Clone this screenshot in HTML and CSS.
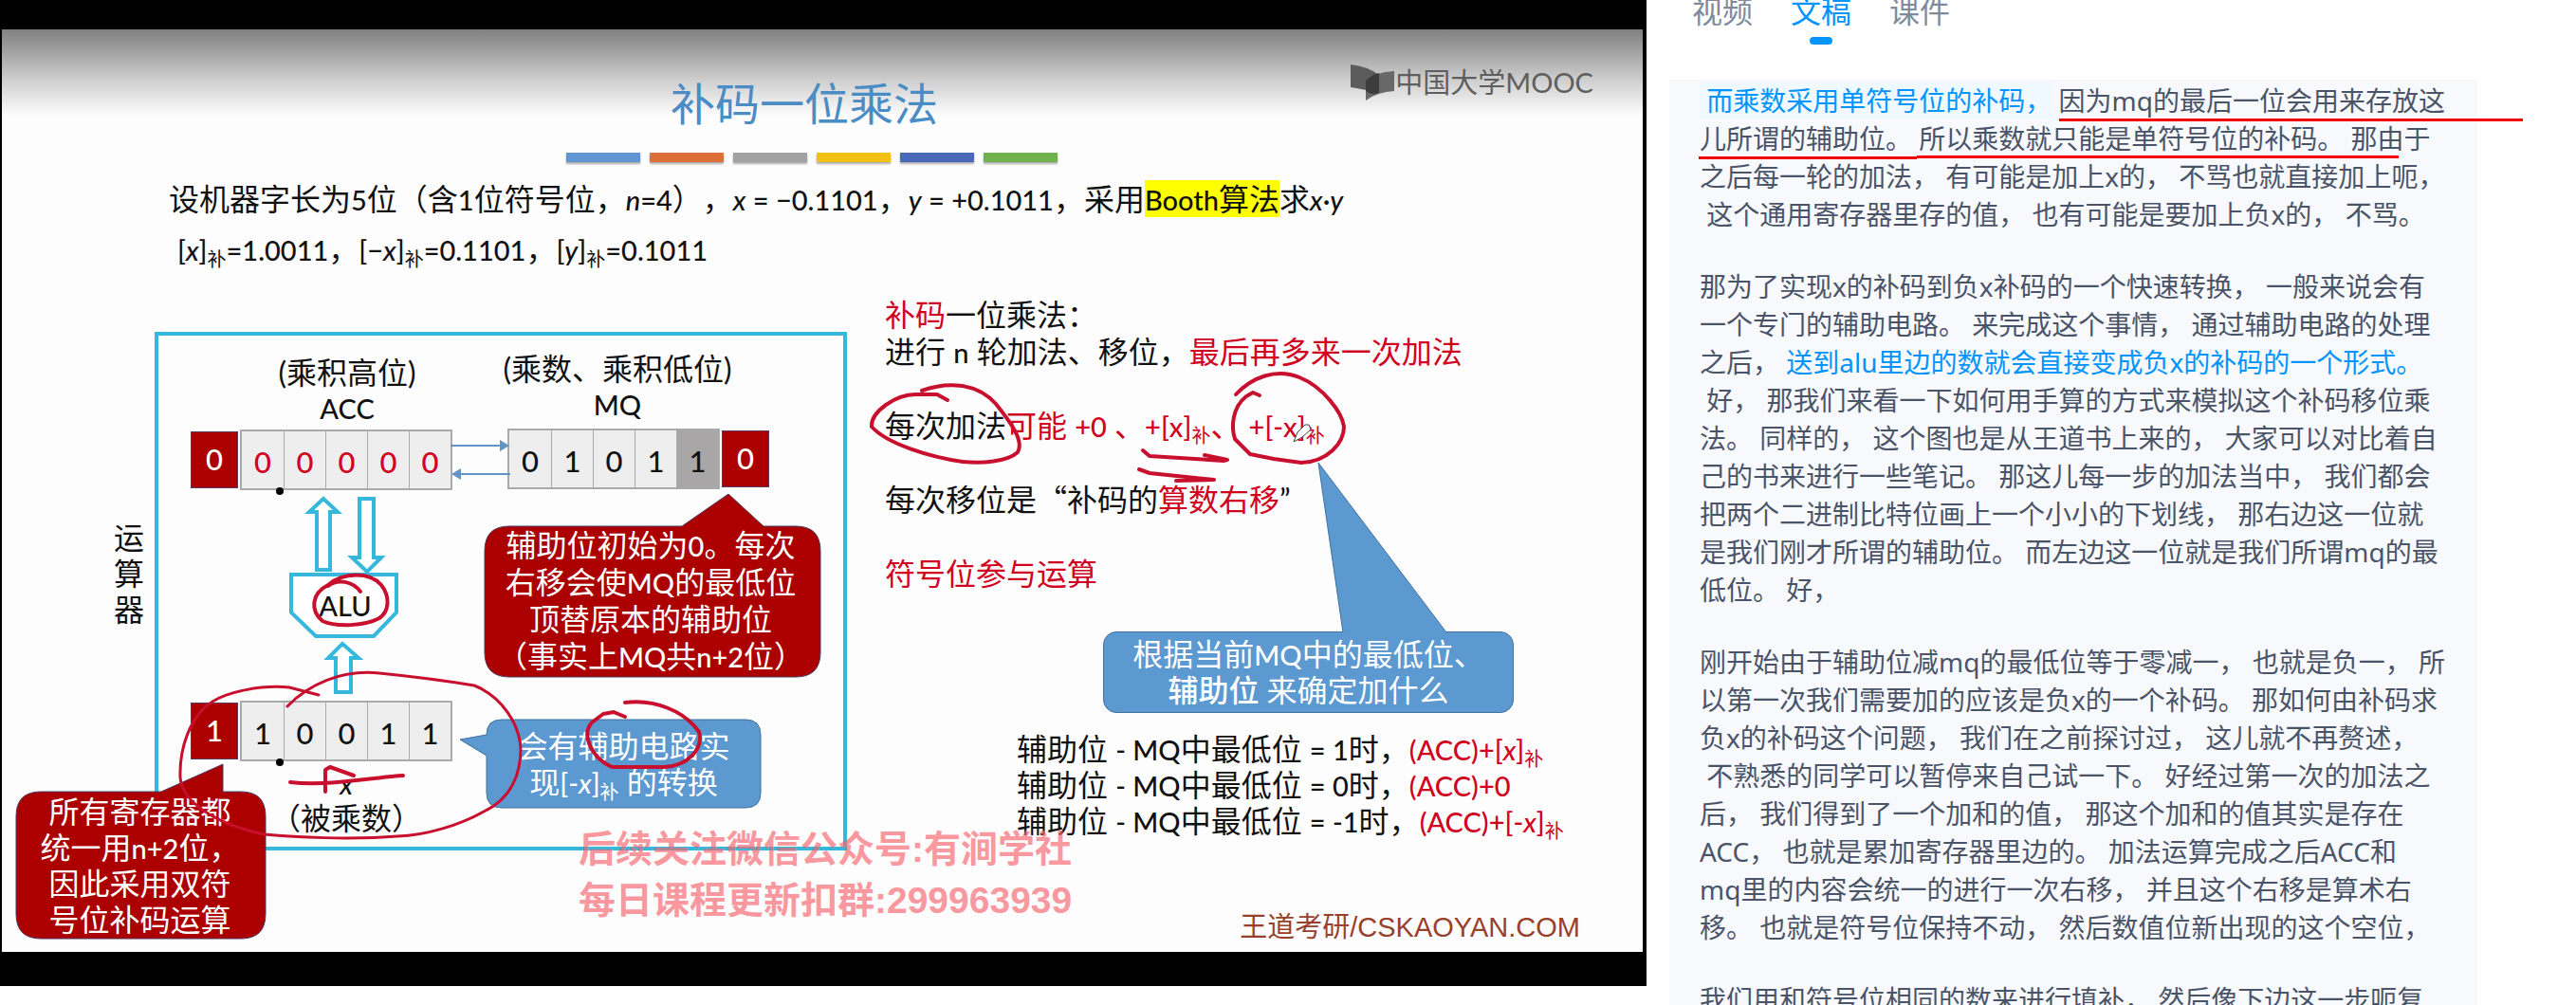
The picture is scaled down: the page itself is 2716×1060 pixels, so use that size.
FILE: index.html
```html
<!DOCTYPE html>
<html lang="zh-CN">
<head>
<meta charset="utf-8">
<title>补码一位乘法</title>
<link rel="stylesheet" href="styles.css">
</head>
<body>
<main class="page">
  <section class="player">
    <article class="slide">
      <div class="brand">
        <svg width="46" height="38" viewBox="0 0 46 38" aria-hidden="true">
          <path d="M0 0Q18 2 30 11V30Q18 27 0 24Z" fill="#5c5c5c"/>
          <path d="M46 7Q26 8 16 17V38Q28 29 46 28Z" fill="#686868"/>
          <path d="M16 17Q22 11 30 9V30Q22 33 16 28Z" fill="#3c3c3c"/>
        </svg>
        <span>中国大学MOOC</span>
      </div>
      <h1 class="title">补码一位乘法</h1>
      <div class="bars">
        <span class="bar blue"></span><span class="bar orange"></span><span class="bar grey"></span><span class="bar yellow"></span><span class="bar indigo"></span><span class="bar green"></span>
      </div>
      <div class="intro">
        <p>设机器字长为<span class="l">5</span>位（含<span class="l">1</span>位符号位，<span class="l"><i>n</i>=4</span>），<span class="l"><i>x</i> = −0.1101</span>，<span class="l"><i>y</i> = +0.1011</span>，采用<mark><span class="l">Booth</span>算法</mark>求<span class="l"><i>x</i>·<i>y</i></span></p>
        <p class="given"><span class="l">[<i>x</i>]</span><sub>补</sub><span class="l">=1.0011</span>，<span class="l">[−<i>x</i>]</span><sub>补</sub><span class="l">=0.1101</span>，<span class="l">[<i>y</i>]</span><sub>补</sub><span class="l">=0.1011</span></p>
      </div>

      <div class="body">
        <div class="diagram">
          <div class="unit"></div>
          <div class="node unit-name">运算器</div>
          <div class="node acc-name">(乘积高位)<br><span class="l">ACC</span></div>
          <div class="node mq-name">(乘数、乘积低位)<br><span class="l">MQ</span></div>

          <div class="node register acc">
            <b class="extra">0</b><span class="cells red"><b>0</b><b>0</b><b>0</b><b>0</b><b>0</b></span>
          </div>
          <div class="node register mq">
            <span class="cells"><b>0</b><b>1</b><b>0</b><b>1</b><b class="low">1</b></span><b class="extra">0</b>
          </div>
          <div class="node register xreg">
            <b class="extra">1</b><span class="cells"><b>1</b><b>0</b><b>0</b><b>1</b><b>1</b></span>
          </div>
          <div class="node x-name"><i class="l">x</i><br>（被乘数）</div>

          <svg class="shapes" width="931" height="692" viewBox="2 312 931 692" aria-hidden="true">
            <g fill="#000"><ellipse cx="295" cy="518" rx="4" ry="4"/><ellipse cx="295" cy="804" rx="4" ry="4"/></g>
            <g fill="none" stroke="#6294c6" stroke-width="2"><path d="M475 470H528M485 500H538"/></g>
            <g fill="#6294c6"><path d="M527 464L537 470L527 476ZM486 494L476 500L486 506Z"/></g>
            <g fill="#fff" stroke="#35b8dc" stroke-width="4">
              <path d="M334 601V540H326L341 526L356 540H348V601Z"/>
              <path d="M379 526V588H371L387 603L402 588H394V526Z"/>
              <path d="M307 606H418V646L394 671H333L307 646Z"/>
              <path d="M354 730V694H346L361 679L378 694H370V730Z"/>
            </g>
            <g fill="#ac0000" stroke="#4b3a63" stroke-width="1">
              <path d="M537 555H719L768 521L805 555H839Q865 555 865 581V688Q865 714 839 714H537Q511 714 511 688V581Q511 555 537 555Z"/>
              <path d="M43 835H170L235 806V835H254Q280 835 280 861V964Q280 990 254 990H43Q17 990 17 964V861Q17 835 43 835Z"/>
            </g>
            <path fill="#5b99d0" stroke="#41719c" stroke-width="1" d="M529 759H786Q802 759 802 775V836Q802 852 786 852H529Q513 852 513 836V797L485 780L513 775Q513 759 529 759Z"/>
          </svg>
          <div class="node alu">ALU</div>
          <div class="node note aux">辅助位初始为<span class="l">0</span>。每次<br>右移会使<span class="l">MQ</span>的最低位<br>顶替原本的辅助位<br>（事实上<span class="l">MQ</span>共<span class="l">n+2</span>位）</div>
          <div class="node note regs">所有寄存器都<br>统一用<span class="l">n+2</span>位，<br>因此采用双符<br>号位补码运算</div>
          <div class="node note circuit">会有辅助电路实<br>现<span class="l">[-<i>x</i>]</span><sub>补</sub> 的转换</div>
        </div>

        <div class="notes">
          <div class="steps">
            <p><em>补码</em>一位乘法：</p>
            <p>进行 <span class="l">n</span> 轮加法、移位，<em>最后再多来一次加法</em></p>
            <p class="spaced">每次加法<em>可能 <span class="l">+0</span> 、<span class="l">+[x]</span><sub>补</sub>、 <span class="l">+[-x]</span><sub>补</sub></em></p>
            <p class="spaced">每次移位是<span class="cjk">“</span>补码的<em>算数右移</em>”</p>
            <p class="spaced"><em>符号位参与运算</em></p>
          </div>
          <div class="decide">
            <svg class="tail" width="112" height="181" viewBox="0 0 112 181" aria-hidden="true"><path d="M27 180L1 1L136 180" fill="#5b99d0" stroke="#41719c" stroke-width="1"/></svg>
            根据当前<span class="l">MQ</span>中的最低位、<br><strong>辅助位</strong> 来确定加什么
          </div>
          <div class="rules">
            <p>辅助位 <span class="l">- MQ</span>中最低位 <span class="l">= 1</span>时，<em><span class="l">(ACC)+[<i>x</i>]</span><sub>补</sub></em></p>
            <p>辅助位 <span class="l">- MQ</span>中最低位 <span class="l">= 0</span>时，<em><span class="l">(ACC)+0</span></em></p>
            <p>辅助位 <span class="l">- MQ</span>中最低位 <span class="l">= -1</span>时，<em><span class="l">(ACC)+[-<i>x</i>]</span><sub>补</sub></em></p>
          </div>
          <p class="credit">王道考研/CSKAOYAN.COM</p>
        </div>
      </div>
    </article>

    <p class="watermark">后续关注微信公众号:有涧学社<br>每日课程更新扣群:299963939</p>

    <svg class="ink" width="1736" height="1040" viewBox="0 0 1736 1040" aria-hidden="true">
      <g fill="none" stroke="#c8102e" stroke-width="4" stroke-linecap="round" stroke-linejoin="round">
        <path d="M346 618C356 610 372 613 380 624M346 617C362 603 390 603 402 617C412 630 410 645 400 652C385 660 355 662 340 655C327 644 328 626 346 617"/>
        <path d="M972 412C1000 402 1030 404 1050 426C1066 446 1080 465 1073 477C1062 487 1035 489 1015 487C980 482 935 468 919 450C918 434 945 416 965 416H988L999 422"/>
        <path d="M1303 416C1320 398 1345 388 1370 398C1395 408 1415 435 1417 450C1417 467 1400 487 1372 488L1343 484L1318 479L1302 463C1298 450 1299 430 1314 418L1321 414L1328 417"/>
        <path d="M1205 475L1212 481L1290 486L1294 485L1270 480M1201 495L1212 499L1280 506L1240 507"/>
        <path stroke-width="3" d="M303 745C325 722 360 706 400 710C430 713 470 718 500 723C530 735 548 765 549 790C549 815 540 842 510 856C485 870 450 881 419 882C370 886 310 883 279 880C225 869 192 845 190 820C189 790 200 755 224 740C240 730 275 722 305 725L336 733"/>
        <path d="M659 741C690 737 722 750 737 772C742 790 725 808 700 809H645C625 800 612 776 624 762L636 753L647 751L659 756"/>
        <path d="M306 825C345 830 400 819 425 818M343 835V812L348 809L373 818"/>
      </g>
      <path d="M1364 466L1368 456L1376 448L1380 448L1382 453L1373 461Z" fill="#fff" stroke="#444" stroke-width="1"/>
    </svg>
  </section>

  <section class="side">
    <nav class="tabs">
      <button type="button">视频</button>
      <button type="button" class="active">文稿</button>
      <button type="button">课件</button>
    </nav>
    <div class="transcript">
      <p><span class="now">&nbsp;而乘数采用单符号位的补码，</span>&nbsp;因为mq的最后一位会用来存放这<br>儿所谓的辅助位。&nbsp;所以乘数就只能是单符号位的补码。&nbsp;那由于<br>之后每一轮的加法，&nbsp;有可能是加上x的，&nbsp;不骂也就直接加上呃，<br>&nbsp;这个通用寄存器里存的值，&nbsp;也有可能是要加上负x的，&nbsp;不骂。</p>
      <p>那为了实现x的补码到负x补码的一个快速转换，&nbsp;一般来说会有<br>一个专门的辅助电路。&nbsp;来完成这个事情，&nbsp;通过辅助电路的处理<br>之后，&nbsp;<span class="hot">送到alu里边的数就会直接变成负x的补码的一个形式。</span><br>&nbsp;好，&nbsp;那我们来看一下如何用手算的方式来模拟这个补码移位乘<br>法。&nbsp;同样的，&nbsp;这个图也是从王道书上来的，&nbsp;大家可以对比着自<br>己的书来进行一些笔记。&nbsp;那这儿每一步的加法当中，&nbsp;我们都会<br>把两个二进制比特位画上一个小小的下划线，&nbsp;那右边这一位就<br>是我们刚才所谓的辅助位。&nbsp;而左边这一位就是我们所谓mq的最<br>低位。&nbsp;好，</p>
      <p>刚开始由于辅助位减mq的最低位等于零减一，&nbsp;也就是负一，&nbsp;所<br>以第一次我们需要加的应该是负x的一个补码。&nbsp;那如何由补码求<br>负x的补码这个问题，&nbsp;我们在之前探讨过，&nbsp;这儿就不再赘述，<br>&nbsp;不熟悉的同学可以暂停来自己试一下。&nbsp;好经过第一次的加法之<br>后，&nbsp;我们得到了一个加和的值，&nbsp;那这个加和的值其实是存在<br>ACC，&nbsp;也就是累加寄存器里边的。&nbsp;加法运算完成之后ACC和<br>mq里的内容会统一的进行一次右移，&nbsp;并且这个右移是算术右<br>移。&nbsp;也就是符号位保持不动，&nbsp;然后数值位新出现的这个空位，</p>
      <p>我们用和符号位相同的数来进行填补，&nbsp;然后像下边这一步呃复</p>
      <svg class="strokes" width="900" height="90" viewBox="1760 84 900 90" aria-hidden="true">
        <path d="M2171 126.500H2660M1791 166.500H2021M2021 165.500H2529" stroke="#f80000" stroke-width="3" fill="none"/>
      </svg>
    </div>
  </section>
</main>
</body>
</html>
```
FILE: styles.css
```css
* { box-sizing: border-box; }
html, body { height: 100%; }
body {
  margin: 0;
  overflow: hidden;
  background: #fff;
  font-family: "Noto Sans", "Noto Sans CJK SC", sans-serif;
  text-spacing-trim: space-all;
}
p, h1 { margin: 0; }

.page {
  display: grid;
  grid-template-columns: minmax(0, 1736fr) minmax(0, 980fr);
  align-items: start;
}

/* ---------- video frame ---------- */
.player {
  position: relative;
  overflow: hidden;
  padding: 31px 4px 36px 2px;
  background: #000;
}
.slide {
  position: relative;
  min-height: 973px;
  overflow: hidden;
  background: #fdfdfd linear-gradient(#808080, #d0d0d0 60%, #fdfdfd) no-repeat 0 0 / 100% 91px;
  color: #111;
  font-family: Lato, "Noto Sans CJK SC", sans-serif;
  font-size: 32px;
  line-height: 39px;
  white-space: nowrap;
}
.l { font-size: 29px; font-weight: 500; line-height: 1; }
.cjk { font-family: "Noto Sans CJK SC", sans-serif; line-height: 1; }
sub { font-size: 20px; line-height: 0; vertical-align: -6px; }
em { font-style: normal; color: #d0021f; }

.brand {
  position: absolute;
  top: 36px;
  right: 52px;
  display: flex;
  align-items: center;
  gap: 1px;
  font-size: 29px;
  color: #5e5e5e;
}
.title {
  padding: 50px 38px 0 0;
  font-size: 47px;
  font-weight: 400;
  line-height: 56px;
  text-align: center;
  color: #4a8cc4;
}
.bars {
  display: flex;
  justify-content: center;
  gap: 10px;
  margin-top: 24px;
  padding-right: 22px;
}
.bar { width: 78px; height: 10px; box-shadow: 0 2px 2px #aaa; }
.blue { background: #6097d2; }
.orange { background: #dd7039; }
.grey { background: #a1a1a1; }
.yellow { background: #f1c013; }
.indigo { background: #4a69b8; }
.green { background: #70b24d; }

.intro {
  display: grid;
  gap: 11px;
  padding: 18px 0 28px 176px;
  line-height: 42px;
}
.intro .given { padding-left: 9px; }
mark { padding: 0; background: #ff0; color: inherit; }

.body { display: grid; grid-template-columns: 931px 1fr; }

/* ---------- block diagram ---------- */
.diagram { position: relative; min-height: 692px; }
.node { position: absolute; text-align: center; }
.shapes { position: absolute; top: 0; left: 0; }
.unit {
  position: absolute;
  left: 161px;
  top: 38px;
  width: 730px;
  height: 547px;
  border: 4px solid #35b8dc;
}
.unit-name { left: 118px; top: 236px; width: 32px; white-space: normal; line-height: 38px; }
.acc-name { left: 264px; top: 62px; width: 200px; line-height: 37px; }
.mq-name { left: 499px; top: 58px; width: 300px; line-height: 37px; }
.x-name { left: 263px; top: 495px; width: 200px; line-height: 37px; }
.alu { left: 312px; top: 307px; width: 100px; font-size: 29px; font-weight: 500; }

.register { display: flex; align-items: center; gap: 2px; font-size: 31px; line-height: 64px; }
.register b { font-weight: 500; }
.cells { display: flex; border: 2px solid #aaa; background: #eee; }
.cells b { width: 44px; height: 60px; }
.cells b + b { border-left: 1px solid #aaa; }
.cells.red { color: #d0021f; }
.cells .low { background: #a8a6a6; }
.extra { width: 50px; height: 60px; border: 1px solid #5b3a63; background: #ac0000; color: #fff; line-height: 56px; }
.acc { left: 199px; top: 141px; }
.mq { left: 533px; top: 140px; }
.xreg { left: 199px; top: 427px; }

.note { color: #fff; }
.aux { left: 507px; top: 243px; width: 354px; }
.regs { left: 14px; top: 525px; width: 263px; line-height: 38px; }
.circuit { left: 511px; top: 456px; width: 289px; line-height: 38px; }

/* ---------- right-hand notes ---------- */
.spaced { margin-top: 39px; }
.decide {
  position: relative;
  width: 433px;
  margin: 42px 0 0 230px;
  padding: 4px 0;
  border: 1px solid #41719c;
  border-radius: 14px;
  background: #5b99d0;
  color: #fff;
  line-height: 38px;
  text-align: center;
}
.decide strong { font-weight: 500; }
.tail { position: absolute; left: 225px; top: -180px; overflow: visible; }
.rules { margin: 19px 0 0 139px; line-height: 38px; }
.credit {
  margin: 73px 66px 0 0;
  font: 400 29px/40px "Liberation Sans", "Noto Sans CJK SC", sans-serif;
  text-align: right;
  color: #98402b;
}

.watermark {
  position: absolute;
  left: 610px;
  top: 869px;
  font: 700 39px/54px "Liberation Sans", "Noto Sans CJK SC", sans-serif;
  white-space: nowrap;
  color: rgba(248, 100, 110, 0.68);
}
.ink { position: absolute; left: 0; top: 0; }

/* ---------- transcript ---------- */
.side { padding: 0 104px 0 24px; }
.tabs { display: flex; gap: 40px; height: 84px; padding-left: 24px; }
.tabs button {
  position: relative;
  height: 55px;
  margin-top: -8px;
  padding: 0 0 15px;
  border: 0;
  background: none;
  color: #7f8a9c;
  font: 400 32px/40px "Noto Sans", "Noto Sans CJK SC", sans-serif;
}
.tabs .active { color: #0094ff; }
.tabs .active::after {
  content: "";
  position: absolute;
  left: 20px;
  bottom: 0;
  width: 24px;
  height: 8px;
  border-radius: 4px;
  background: #0094ff;
}
.transcript {
  position: relative;
  display: grid;
  gap: 36px;
  padding: 2px 32px 32px;
  background: #f8f9fd;
  color: #4a5468;
  font-size: 28px;
  line-height: 40px;
  white-space: nowrap;
}
.now { padding: 0; background: #f0f9ff; color: #0094ff; }
.hot { color: #0094ff; }
.strokes { position: absolute; left: 0; top: 0; }
```
